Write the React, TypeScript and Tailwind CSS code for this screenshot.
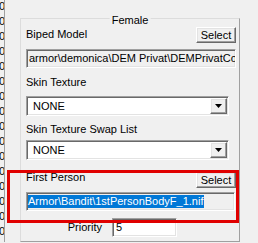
import React from "react";

const sunken =
  "border border-t-[#a0a0a0] border-l-[#a0a0a0] border-b-white border-r-white shadow-[inset_1px_1px_0_#696969,inset_-1px_-1px_0_#e3e3e3]";
const raised =
  "border border-t-white border-l-white border-b-[#696969] border-r-[#696969] shadow-[inset_-1px_-1px_0_#a0a0a0,inset_1px_1px_0_#e3e3e3]";

function SelectButton() {
  return (
    <div className={`w-[40px] h-[16px] bg-[#f0f0f0] flex items-center justify-center ${raised}`}>
      <span className="leading-[13px]">Select</span>
    </div>
  );
}

function Dropdown({ value }: { value: string }) {
  return (
    <div className={`w-[203px] h-[20px] bg-white flex items-stretch ${sunken} p-[1px]`}>
      <div className="flex-1 flex items-center pl-[5px] leading-[13px]">{value}</div>
      <div className={`w-[17px] bg-[#f0f0f0] flex items-center justify-center ${raised}`}>
        <svg width="7" height="4" viewBox="0 0 7 4">
          <path d="M0 0H7L3.5 4Z" fill="#000" />
        </svg>
      </div>
    </div>
  );
}

export default function App() {
  return (
    <div className="relative w-[258px] h-[243px] overflow-hidden bg-[#f0f0f0] text-[11px] leading-[13px] text-black font-['Liberation_Sans',Arial,sans-serif] flex items-start">
      <div className="w-[5px] h-[243px] overflow-hidden flex flex-col items-end border-r border-r-[#a0a0a0] pt-[0px] -mt-[1px]">
        {Array.from({ length: 17 }).map((_, i) => (
          <div key={i} className="h-[15px] leading-[15px] shrink-0 -mr-[1px]">
            0
          </div>
        ))}
      </div>

      <div className="relative ml-[15px] mt-[18px] w-[220px] h-[224px] border border-[#dcdcdc] border-r-[#a0a0a0] border-b-[#a0a0a0] flex flex-col pl-[5px] pr-[3px]">
        <span className="absolute left-1/2 -translate-x-1/2 -top-[5px] bg-[#f0f0f0] px-[2px] leading-[13px]">
          Female
        </span>

        <div className="mt-[8px] flex items-start justify-between">
          <span className="mt-[1px]">Biped Model</span>
          <SelectButton />
        </div>

        <div className={`mt-[6px] h-[19px] w-[210px] bg-[#f0f0f0] ${sunken} flex items-center pl-[2px] overflow-hidden whitespace-nowrap`}>
          armor\demonica\DEM Privat\DEMPrivatCorsetF.nif
        </div>

        <div className="mt-[8px]">Skin Texture</div>
        <div className="mt-[7px]">
          <Dropdown value="NONE" />
        </div>

        <div className="mt-[7px]">Skin Texture Swap List</div>
        <div className="mt-[4px]">
          <Dropdown value="NONE" />
        </div>

        <div className="mt-[12px] flex items-start justify-between">
          <span className="-mt-[1px]">First Person</span>
          <SelectButton />
        </div>

        <div className={`mt-[4px] h-[19px] w-[209px] bg-[#f0f0f0] ${sunken} flex items-center pl-[1px] overflow-hidden whitespace-nowrap`}>
          <span className="bg-[#0078d7] text-white leading-[13px] pr-[1px]">
            Armor\Bandit\1stPersonBodyF_1.nif
          </span>
        </div>

        <div className="mt-[7px] flex items-center">
          <span className="w-[76px] text-right">Priority</span>
          <div className={`ml-[10px] w-[65px] h-[19px] bg-white ${sunken} flex items-center pl-[3px]`}>
            5
          </div>
        </div>
      </div>

      <div className="absolute left-[7px] top-[170px] w-[232px] h-[53px] border-[3px] border-[#e00000] pointer-events-none" />
    </div>
  );
}
